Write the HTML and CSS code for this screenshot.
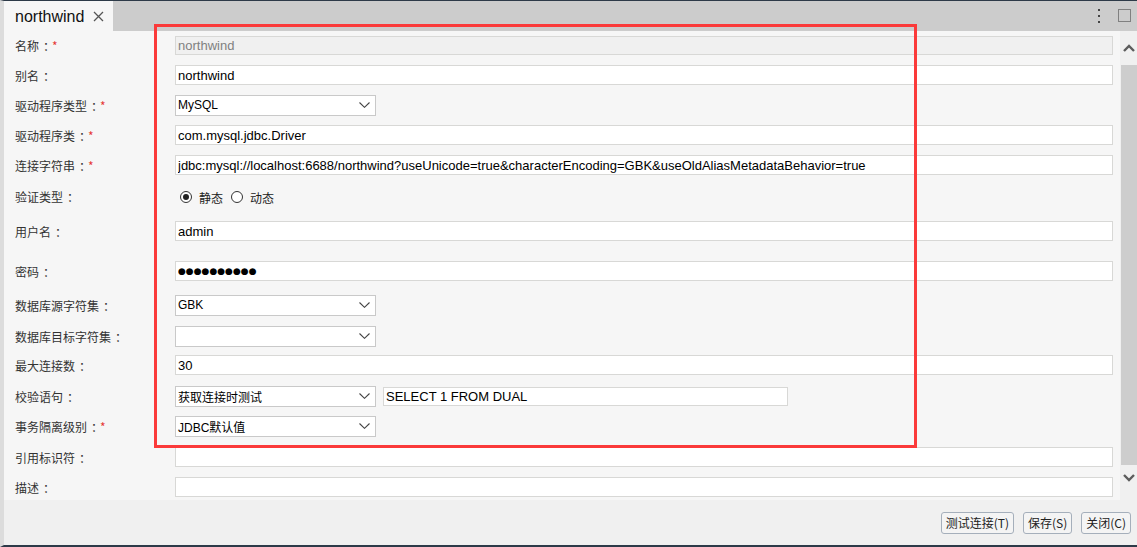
FILE: index.html
```html
<!DOCTYPE html>
<html lang="zh">
<head>
    <meta charset="UTF-8">
    <meta name="viewport" content="width=device-width, initial-scale=1.0">
    <title>northwind</title>
    <link rel="stylesheet" href="styles.css">
</head>
<body>
    <div class="window">
        <div class="tabbar">
            <div class="tab">
                <span class="tab-title">northwind</span>
                <svg class="tab-close" width="11" height="11" viewBox="0 0 11 11"><path d="M1 1 L10 10 M10 1 L1 10" stroke="#555" stroke-width="1.3"/></svg>
            </div>
            <div class="tab-tools">
                <span class="dots"><i></i><i></i><i></i></span>
                <span class="maximize"></span>
            </div>
        </div>

        <div class="main">
            <div class="form">
                <div class="row first">
                    <label class="label">名称<span class="colon">：</span><em>*</em></label>
                    <input class="field wide disabled" value="northwind" disabled>
                </div>
                <div class="row">
                    <label class="label">别名<span class="colon">：</span></label>
                    <input class="field wide" value="northwind">
                </div>
                <div class="row">
                    <label class="label">驱动程序类型<span class="colon">：</span><em>*</em></label>
                    <div class="select"><span>MySQL</span><svg width="11" height="6" viewBox="0 0 11 6"><path d="M0.5 0.5 L5.5 5.3 L10.5 0.5" fill="none" stroke="#444" stroke-width="1.1"/></svg></div>
                </div>
                <div class="row">
                    <label class="label">驱动程序类<span class="colon">：</span><em>*</em></label>
                    <input class="field wide" value="com.mysql.jdbc.Driver">
                </div>
                <div class="row">
                    <label class="label">连接字符串<span class="colon">：</span><em>*</em></label>
                    <input class="field wide" value="jdbc:mysql://localhost:6688/northwind?useUnicode=true&amp;characterEncoding=GBK&amp;useOldAliasMetadataBehavior=true">
                </div>
                <div class="row radios-row">
                    <label class="label">验证类型<span class="colon">：</span></label>
                    <div class="radios">
                        <span class="radio checked"></span><span class="radio-text">静态</span>
                        <span class="radio"></span><span class="radio-text">动态</span>
                    </div>
                </div>
                <div class="row sp4">
                    <label class="label">用户名<span class="colon">：</span></label>
                    <input class="field wide" value="admin">
                </div>
                <div class="row sp10">
                    <label class="label">密码<span class="colon">：</span></label>
                    <input class="field wide password" value="●●●●●●●●●●">
                </div>
                <div class="row sp4">
                    <label class="label">数据库源字符集<span class="colon">：</span></label>
                    <div class="select"><span>GBK</span><svg width="11" height="6" viewBox="0 0 11 6"><path d="M0.5 0.5 L5.5 5.3 L10.5 0.5" fill="none" stroke="#444" stroke-width="1.1"/></svg></div>
                </div>
                <div class="row sp1">
                    <label class="label">数据库目标字符集<span class="colon">：</span></label>
                    <div class="select"><span></span><svg width="11" height="6" viewBox="0 0 11 6"><path d="M0.5 0.5 L5.5 5.3 L10.5 0.5" fill="none" stroke="#444" stroke-width="1.1"/></svg></div>
                </div>
                <div class="row spm1">
                    <label class="label">最大连接数<span class="colon">：</span></label>
                    <input class="field wide" value="30">
                </div>
                <div class="row sp1">
                    <label class="label">校验语句<span class="colon">：</span></label>
                    <div class="select"><span class="cjk">获取连接时测试</span><svg width="11" height="6" viewBox="0 0 11 6"><path d="M0.5 0.5 L5.5 5.3 L10.5 0.5" fill="none" stroke="#444" stroke-width="1.1"/></svg></div>
                    <input class="field sql" value="SELECT 1 FROM DUAL">
                </div>
                <div class="row">
                    <label class="label">事务隔离级别<span class="colon">：</span><em>*</em></label>
                    <div class="select"><span class="cjk">JDBC默认值</span><svg width="11" height="6" viewBox="0 0 11 6"><path d="M0.5 0.5 L5.5 5.3 L10.5 0.5" fill="none" stroke="#444" stroke-width="1.1"/></svg></div>
                </div>
                <div class="row sp1">
                    <label class="label">引用标识符<span class="colon">：</span></label>
                    <input class="field wide" value="">
                </div>
                <div class="row">
                    <label class="label">描述<span class="colon">：</span></label>
                    <input class="field wide" value="">
                </div>
            </div>

            <div class="scrollbar">
                <div class="scroll-btn up">
                    <svg width="12" height="8" viewBox="0 0 12 8"><path d="M1 7 L6 2 L11 7" fill="none" stroke="#5c5c5c" stroke-width="2.4"/></svg>
                </div>
                <div class="thumb"></div>
                <div class="scroll-btn down">
                    <svg width="12" height="8" viewBox="0 0 12 8"><path d="M1 1 L6 6 L11 1" fill="none" stroke="#5c5c5c" stroke-width="2.4"/></svg>
                </div>
            </div>

            <div class="highlight"></div>
        </div>

        <div class="footer">
            <button class="btn">测试连接(T)</button>
            <button class="btn">保存(S)</button>
            <button class="btn">关闭(C)</button>
        </div>
    </div>
</body>
</html>
```

FILE: styles.css
```css
body {
    margin: 0;
    font-family: "Liberation Sans", Arial, "Noto Sans CJK SC", sans-serif;
    background: #f0f0f0;
}

.window {
    width: 1137px;
    height: 547px;
    box-sizing: border-box;
    border-top: 1px solid #2d3a48;
    border-bottom: 2px solid #2d3a48;
    border-left: 4px solid #dcdcdc;
    display: flex;
    flex-direction: column;
    overflow: hidden;
}

.tabbar {
    height: 30px;
    background-color: #cccccc;
    display: flex;
    justify-content: space-between;
    flex-shrink: 0;
}

.tab {
    width: 109px;
    background-color: #f6f6f6;
    display: flex;
    align-items: center;
    padding-left: 11px;
    box-sizing: border-box;
}

.tab-title {
    font-size: 16px;
    color: #111;
    padding-top: 1px;
}

.tab-close {
    margin-left: 9px;
}

.tab-tools {
    display: flex;
    align-items: center;
    padding-right: 6px;
}

.dots {
    display: flex;
    flex-direction: column;
    gap: 4px;
    margin-right: 18px;
}

.dots i {
    width: 2px;
    height: 2px;
    background: #444;
}

.maximize {
    width: 11px;
    height: 11px;
    border: 1.5px solid #808080;
    margin-top: -1px;
}

.main {
    position: relative;
    height: 469px;
    display: flex;
    background-color: #f6f6f6;
    flex-shrink: 0;
}

.form {
    flex: 1;
    padding-right: 7px;
    overflow: hidden;
}

.row {
    display: flex;
    align-items: center;
    height: 30px;
}

.row.first {
    height: 29px;
}

.row.radios-row {
    height: 32px;
}

.row.sp1 { margin-top: 1px; }
.row.sp4 { margin-top: 4px; }
.row.sp10 { margin-top: 10px; }
.row.spm1 { margin-top: -1px; }

.label {
    width: 171px;
    padding-left: 11px;
    box-sizing: border-box;
    font-family: "Noto Sans CJK SC", sans-serif;
    font-size: 12px;
    color: #333;
    flex-shrink: 0;
}

.label .colon {
    margin-left: 4px;
    letter-spacing: -4px;
}

.label em {
    font-style: normal;
    color: #e53935;
    margin-left: 1px;
}

.field {
    height: 20px;
    box-sizing: border-box;
    border: 1px solid #d8d8d6;
    background: #fff;
    padding: 0 2px;
    font-family: "Liberation Sans", Arial, sans-serif;
    font-size: 13px;
    color: #000;
    outline: none;
}

.field.wide {
    flex: 1;
}

.field.disabled {
    height: 19px;
    background: #f0f0f0;
    color: #808080;
}

.field.password {
    font-family: "DejaVu Sans", sans-serif;
    font-size: 9px;
}

.field.sql {
    width: 405px;
    height: 19px;
    margin-left: 7px;
}

.select {
    width: 201px;
    height: 21px;
    box-sizing: border-box;
    border: 1px solid #c9c9c9;
    background: #fff;
    display: flex;
    align-items: center;
    justify-content: space-between;
    padding: 0 5px 0 2px;
    font-size: 12px;
    color: #000;
}

.select .cjk {
    font-family: "Liberation Sans", "Noto Sans CJK SC", sans-serif;
}

.radios {
    display: flex;
    align-items: center;
    padding-left: 5px;
    padding-top: 2px;
}

.radio {
    width: 12px;
    height: 12px;
    box-sizing: border-box;
    border: 1px solid #333;
    border-radius: 50%;
    background: #fff;
    display: flex;
    align-items: center;
    justify-content: center;
}

.radio.checked::after {
    content: "";
    width: 6px;
    height: 6px;
    border-radius: 50%;
    background: #222;
}

.radio-text {
    font-family: "Noto Sans CJK SC", sans-serif;
    font-size: 12px;
    color: #222;
    margin: 0 8px 0 7px;
}

.scrollbar {
    width: 17px;
    background: #f0f0f0;
    display: flex;
    flex-direction: column;
    flex-shrink: 0;
}

.scroll-btn {
    height: 34px;
    display: flex;
    justify-content: center;
    align-items: center;
}

.scroll-btn.down {
    height: 35px;
    align-items: flex-start;
    padding-top: 9px;
    box-sizing: border-box;
}

.thumb {
    flex: 1;
    margin-left: 1px;
    background: #cdcdcd;
}

.highlight {
    position: absolute;
    left: 150px;
    top: -7px;
    width: 763px;
    height: 424px;
    box-sizing: border-box;
    border: 3px solid #fb3a3a;
    pointer-events: none;
}

.footer {
    flex: 1;
    display: flex;
    justify-content: flex-end;
    align-items: center;
    gap: 9px;
    padding-right: 6px;
    background-color: #f0f0f0;
}

.btn {
    height: 22px;
    box-sizing: border-box;
    border: 1px solid #a5afbb;
    border-radius: 3px;
    background: #f4f4f4;
    padding: 0 4px;
    font-family: "Noto Sans CJK SC", sans-serif;
    font-size: 12px;
    color: #222;
    cursor: pointer;
}
```
